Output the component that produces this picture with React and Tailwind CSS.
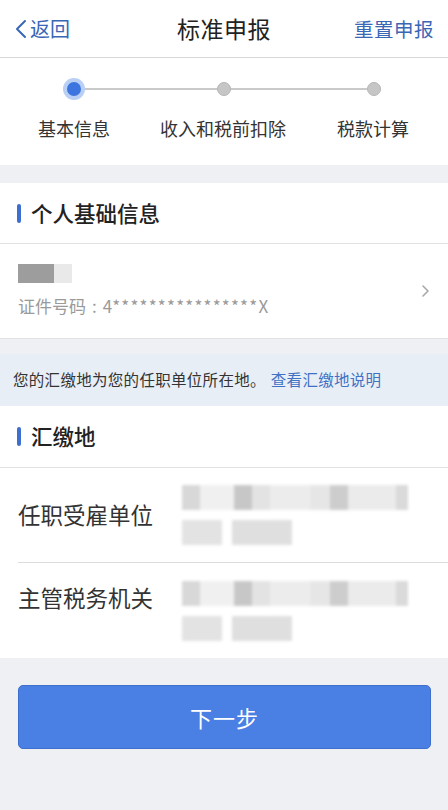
import React from "react";

const font = { fontFamily: '"Noto Sans CJK SC", "Noto Sans", sans-serif' };

function BlurBlock({ rows }) {
  return (
    <div className="flex flex-col gap-[10px] blur-[1.5px] opacity-90">
      {rows.map((r, i) => (
        <div key={i} className="flex h-[25px]">
          {r.map((c, j) => (
            <div key={j} className={c} />
          ))}
        </div>
      ))}
    </div>
  );
}

const line1 = [
  "w-[18px] bg-[#d4d4d4]",
  "w-[34px] bg-[#efefef]",
  "w-[18px] bg-[#c2c2c2]",
  "w-[18px] bg-[#e0e0e0]",
  "w-[40px] bg-[#ebebeb]",
  "w-[20px] bg-[#e4e4e4]",
  "w-[18px] bg-[#c8c8c8]",
  "w-[48px] bg-[#e9e9e9]",
  "w-[12px] bg-[#d6d6d6]",
];
const line2 = [
  "w-[40px] bg-[#e0e0e0]",
  "w-[10px] bg-white",
  "w-[60px] bg-[#dcdcdc]",
];

export default function App() {
  return (
    <div className="w-[448px] h-[810px] bg-[#eef0f3] flex flex-col overflow-hidden" style={font}>
      {/* Header */}
      <div className="h-[58px] bg-white border-b border-[#d6d6d6] flex items-center justify-between px-[14px] shrink-0">
        <div className="flex items-center text-[#3a67b5] text-[20px] w-[90px]">
          <svg width="14" height="22" viewBox="0 0 14 22" className="mr-[2px]">
            <path d="M11 3 L3 11 L11 19" fill="none" stroke="#3a67b5" strokeWidth="2" strokeLinecap="round" strokeLinejoin="round" />
          </svg>
          <span>返回</span>
        </div>
        <div className="text-[23px] text-[#222] tracking-[0.5px]">标准申报</div>
        <div className="text-[19.5px] text-[#3a67b5] w-[90px] text-right tracking-[0.5px]">重置申报</div>
      </div>

      {/* Stepper */}
      <div className="bg-white h-[107px] flex flex-col shrink-0">
        <div className="flex items-center pl-[63px] mt-[20px] h-[22px]">
          <div className="w-[22px] h-[22px] rounded-full bg-[#b9cff3] flex items-center justify-center">
            <div className="w-[14px] h-[14px] rounded-full bg-[#3c74e0]" />
          </div>
          <div className="w-[132px] h-[2px] bg-[#c9c9c9]" />
          <div className="w-[14px] h-[14px] rounded-full bg-[#c6c6c6] border border-[#b5b5b5]" />
          <div className="w-[136px] h-[2px] bg-[#c9c9c9]" />
          <div className="w-[14px] h-[14px] rounded-full bg-[#c6c6c6] border border-[#b5b5b5]" />
        </div>
        <div className="grid grid-cols-[148px_150px_150px] mt-[15px] text-[18px] text-[#333]">
          <div className="text-center">基本信息</div>
          <div className="text-center">收入和税前扣除</div>
          <div className="text-center">税款计算</div>
        </div>
      </div>

      <div className="h-[18px] shrink-0" />

      {/* Personal info section */}
      <div className="bg-white shrink-0">
        <div className="h-[61px] flex items-center pl-[17px] border-b border-[#e2e2e2]">
          <div className="w-[4px] h-[19px] rounded-full bg-[#3c6fd0]" />
          <div className="ml-[10px] text-[21.5px] font-medium text-[#222]">个人基础信息</div>
        </div>
        <div className="h-[95px] flex items-center pl-[18px] pr-[18px] border-b border-[#e2e2e2]">
          <div className="flex-1 flex flex-col">
            <div className="flex h-[19px] blur-[0.6px]">
              <div className="w-[36px] bg-[#9d9d9d]" />
              <div className="w-[18px] bg-[#e9e9e9]" />
            </div>
            <div className="mt-[10px] text-[17px] text-[#9a9a9a] leading-[26px]">
              证件号码<span className="mx-[6px]">:</span>4<span className="tracking-[1.2px]">****************</span>X
            </div>
          </div>
          <svg width="10" height="14" viewBox="0 0 10 14">
            <path d="M3 2 L8 7 L3 12" fill="none" stroke="#a8a8a8" strokeWidth="1.6" strokeLinecap="round" strokeLinejoin="round" />
          </svg>
        </div>
      </div>

      <div className="h-[15px] shrink-0" />

      {/* Notice */}
      <div className="h-[52px] bg-[#e8eef6] flex items-center pl-[13px] text-[15.5px] tracking-[0.3px] shrink-0">
        <span className="text-[#333]">您的汇缴地为您的任职单位所在地。</span>
        <span className="text-[#3f72c4] ml-[5px]">查看汇缴地说明</span>
      </div>

      {/* Remit place section */}
      <div className="bg-white shrink-0">
        <div className="h-[62px] flex items-center pl-[17px] border-b border-[#e2e2e2]">
          <div className="w-[4px] h-[19px] rounded-full bg-[#3c6fd0]" />
          <div className="ml-[10px] text-[21.5px] font-medium text-[#222]">汇缴地</div>
        </div>
        <div className="pl-[18px]">
          <div className="h-[95px] flex items-center border-b border-[#dcdcdc]">
            <div className="w-[164px] text-[22.5px] text-[#333]">任职受雇单位</div>
            <BlurBlock rows={[line1, line2]} />
          </div>
          <div className="h-[95px] flex items-start pt-[18px]">
            <div className="w-[164px] text-[22.5px] text-[#333]">主管税务机关</div>
            <BlurBlock rows={[line1, line2]} />
          </div>
        </div>
      </div>

      {/* Button */}
      <div className="px-[18px] pt-[27px]">
        <button className="w-[413px] h-[64px] rounded-[5px] bg-[#4a80e3] border border-[#3f6fcc] text-white text-[22px] tracking-[1px]">
          下一步
        </button>
      </div>
    </div>
  );
}
